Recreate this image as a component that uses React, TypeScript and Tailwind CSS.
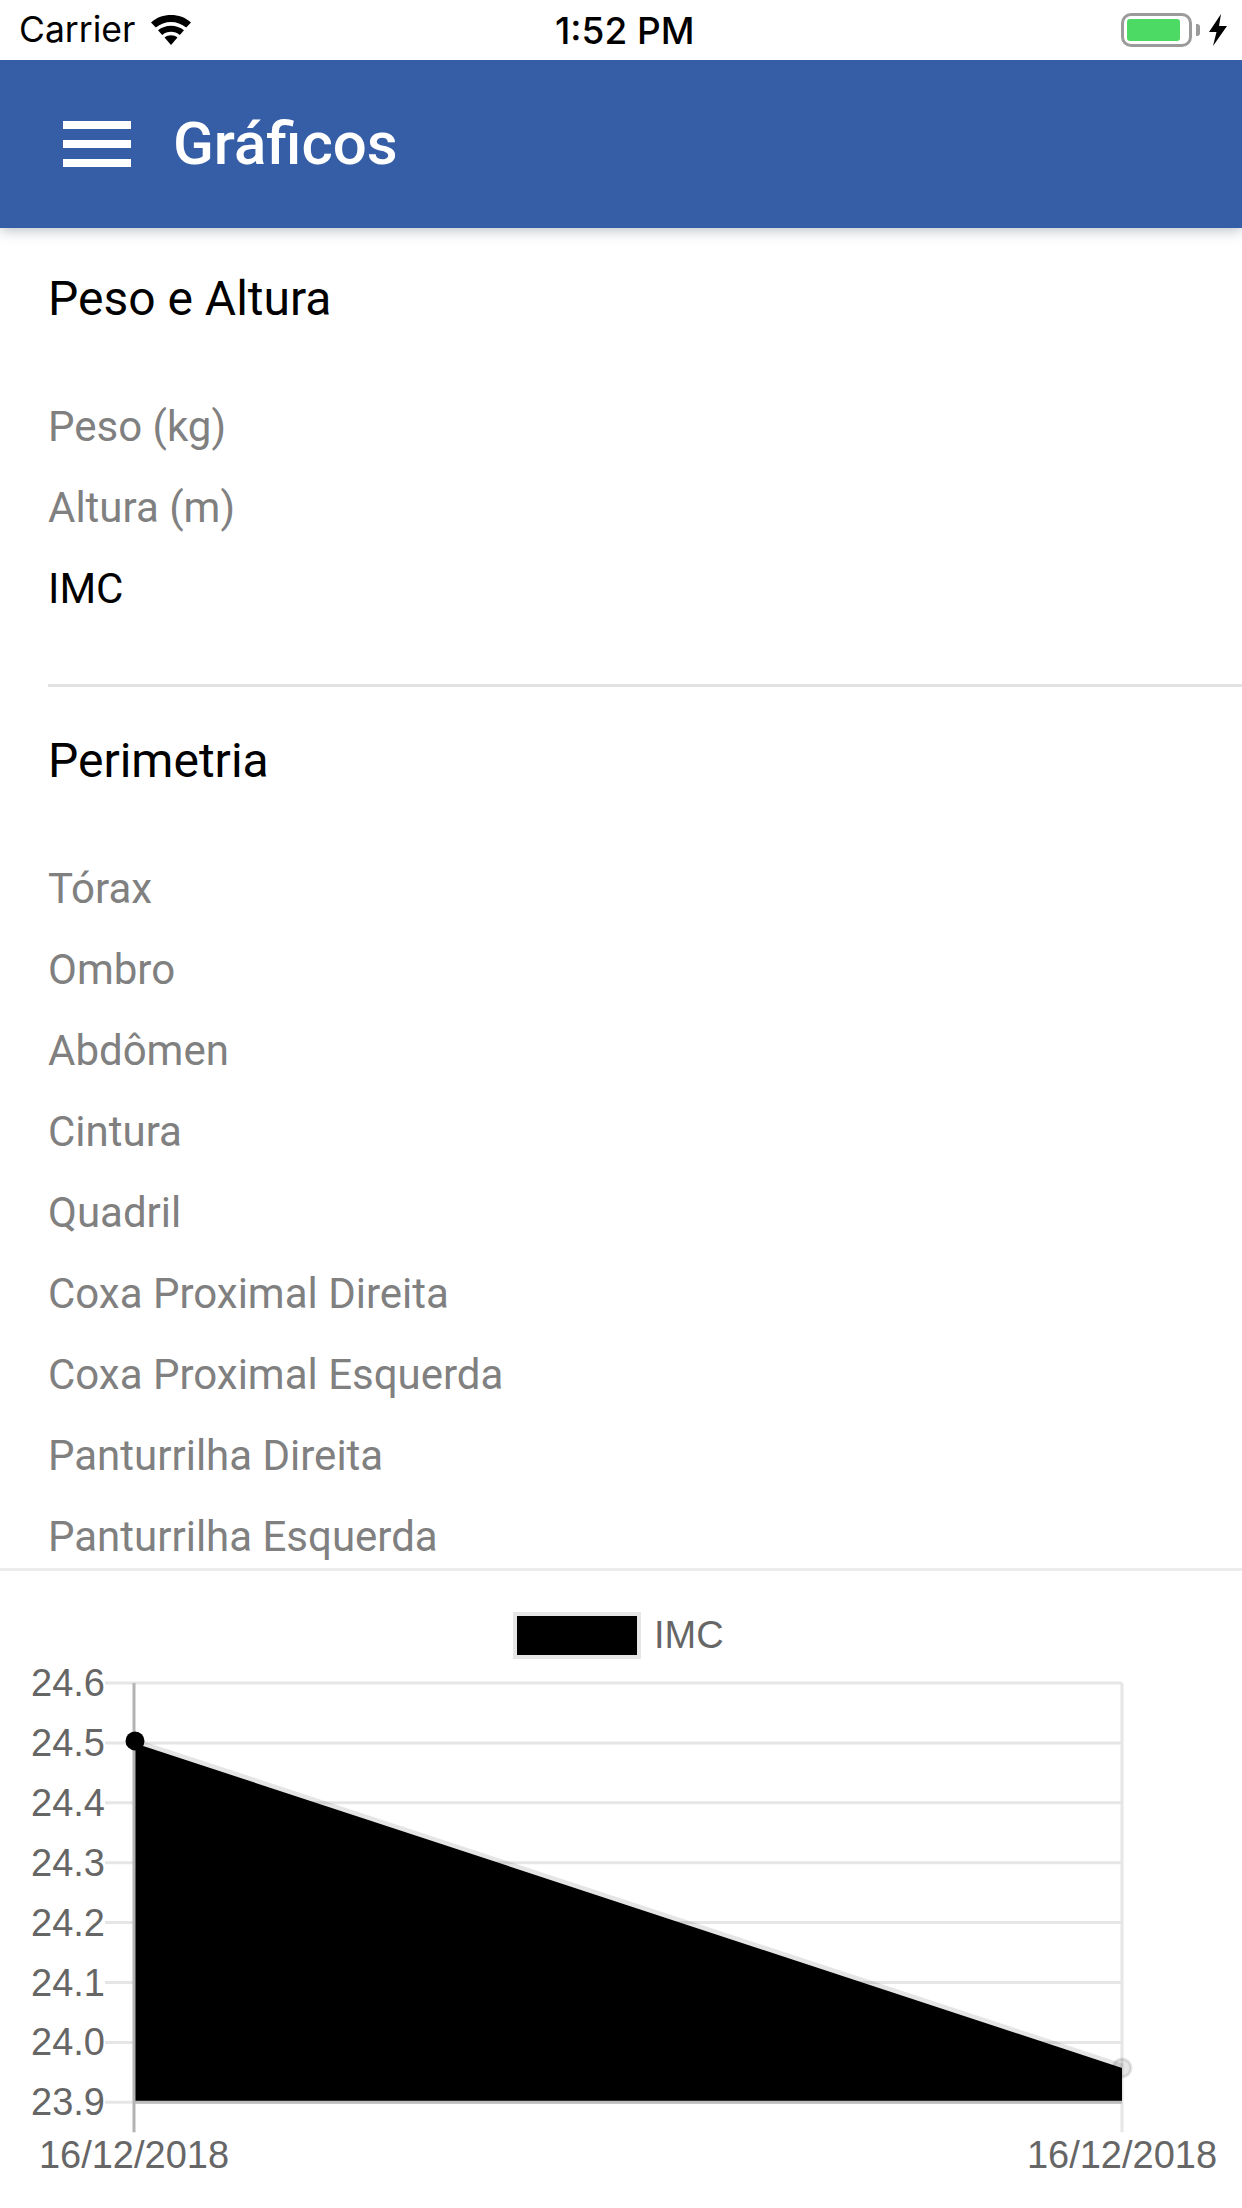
const perimetria = [
  'Tórax',
  'Ombro',
  'Abdômen',
  'Cintura',
  'Quadril',
  'Coxa Proximal Direita',
  'Coxa Proximal Esquerda',
  'Panturrilha Direita',
  'Panturrilha Esquerda',
]

const pesoAltura = [
  { label: 'Peso (kg)', active: false },
  { label: 'Altura (m)', active: false },
  { label: 'IMC', active: true },
]

const yLabels = ['24.6', '24.5', '24.4', '24.3', '24.2', '24.1', '24.0', '23.9']

function StatusBar() {
  return (
    <div className="relative z-20 flex h-[60px] shrink-0 items-center justify-between bg-white pl-[19px] pr-[15px] font-['Inter',sans-serif] text-black">
      <div className="flex items-center gap-[15px]">
        <span className="text-[35.5px] leading-none">Carrier</span>
        <svg width="42" height="30" viewBox="0 0 42 30">
          <path d="M21 30 L14.5 22.6 C18.2 19.6 23.8 19.6 27.5 22.6 Z" fill="black" />
          <path d="M12.2 20 L8 15.2 C15.2 9.2 26.8 9.2 34 15.2 L29.8 20 C24.6 15.8 17.4 15.8 12.2 20 Z" fill="black" />
          <path d="M5.8 12.6 L1 7.4 C12 -2.4 30 -2.4 41 7.4 L36.2 12.6 C27.4 5 14.6 5 5.8 12.6 Z" fill="black" />
        </svg>
      </div>
      <span className="absolute left-[555px] top-[13px] text-[37px] font-medium leading-[36px]">1:52 PM</span>
      <div className="flex items-center gap-[9px]">
        <div className="flex items-center">
          <div className="flex h-[34px] w-[71px] items-center rounded-[10px] border-[3px] border-[#9b9b9b] pl-[3px]">
            <div className="h-[22px] w-[53px] rounded-[3px] bg-[#4cd964]" />
          </div>
          <div className="ml-[4px] h-[12px] w-[4px] rounded-r-[3px] bg-[#9b9b9b]" />
        </div>
        <svg width="18" height="32" viewBox="0 0 18 32">
          <path d="M12 0 L0 18 L7.5 18 L4 32 L18 12 L10 12 Z" fill="black" />
        </svg>
      </div>
    </div>
  )
}

function ListItem({ label, active }: { label: string; active?: boolean }) {
  return (
    <div className={`flex h-[81px] items-center text-[42px] ${active ? 'text-black' : 'text-[#808080]'}`}>
      {label}
    </div>
  )
}

function Chart() {
  const left = 134
  const right = 1122
  const top = 112
  const step = 59.9
  const rows = yLabels.map((label, i) => ({ label, y: top + i * step }))
  const bottom = rows[rows.length - 1].y
  const p1 = top + step
  const p2 = 2068 - 1571

  return (
    <svg width="1242" height="637" viewBox="0 0 1242 637" className="block" fontFamily="'Liberation Sans', Arial, sans-serif" fontSize="38" fill="#666666">
      <rect x="515" y="43" width="124" height="43" fill="black" stroke="#e6e6e6" strokeWidth="4" />
      <text x="654" y="77">IMC</text>

      {rows.map((r) => (
        <g key={r.label}>
          <line x1="105" x2={right} y1={r.y} y2={r.y} stroke="#e6e6e6" strokeWidth="3" />
          <text x="31" y={r.y + 13}>{r.label}</text>
        </g>
      ))}
      <line x1={right} x2={right} y1={top} y2={bottom + 30} stroke="#e6e6e6" strokeWidth="3" />

      <polygon points={`${left},${p1} ${right},${p2} ${right},${bottom} ${left},${bottom}`} fill="black" />
      <line x1={left} x2={right} y1={p1} y2={p2} stroke="black" strokeOpacity="0.1" strokeWidth="9" />
      <line x1={left} x2={right} y1={bottom} y2={bottom} stroke="#bdbdbd" strokeWidth="3" />
      <line x1={left} x2={left} y1={top} y2={bottom + 30} stroke="#b3b3b3" strokeWidth="3" />

      <circle cx={left + 1} cy={p1 - 2} r="9.5" fill="black" />
      <circle cx={right} cy={p2} r="9" fill="black" fillOpacity="0.1" stroke="black" strokeOpacity="0.1" strokeWidth="3" />

      <text x={left} y="597" textAnchor="middle">16/12/2018</text>
      <text x={right} y="597" textAnchor="middle">16/12/2018</text>
    </svg>
  )
}

export default function App() {
  return (
    <div className="flex h-[2208px] w-[1242px] flex-col overflow-hidden bg-white font-['Roboto',sans-serif]">
      <StatusBar />
      <header className="relative z-10 flex h-[168px] shrink-0 items-center gap-[42px] bg-[#365ea7] pl-[63px] shadow-[0_3px_12px_rgba(70,90,100,0.35)]">
        <div className="flex flex-col gap-[11px]">
          <div className="h-[8px] w-[68px] bg-white" />
          <div className="h-[8px] w-[68px] bg-white" />
          <div className="h-[8px] w-[68px] bg-white" />
        </div>
        <h1 className="text-[60px] font-medium leading-none text-white">Gráficos</h1>
      </header>

      <div className="h-[1340px] shrink-0 overflow-hidden pl-[48px]">
        <section className="pt-[36px]">
          <h2 className="flex h-[70px] items-center text-[48px] text-black">Peso e Altura</h2>
          <div className="mt-[52px]">
            {pesoAltura.map((item) => (
              <ListItem key={item.label} label={item.label} active={item.active} />
            ))}
          </div>
          <div className="mt-[55px] h-[3px] bg-[#e2e2e2]" />
        </section>
        <section className="pt-[39px]">
          <h2 className="flex h-[70px] items-center text-[48px] text-black">Perimetria</h2>
          <div className="mt-[52px]">
            {perimetria.map((item) => (
              <ListItem key={item} label={item} />
            ))}
          </div>
        </section>
      </div>

      <div className="border-t-[3px] border-[#ececec]">
        <Chart />
      </div>
    </div>
  )
}
